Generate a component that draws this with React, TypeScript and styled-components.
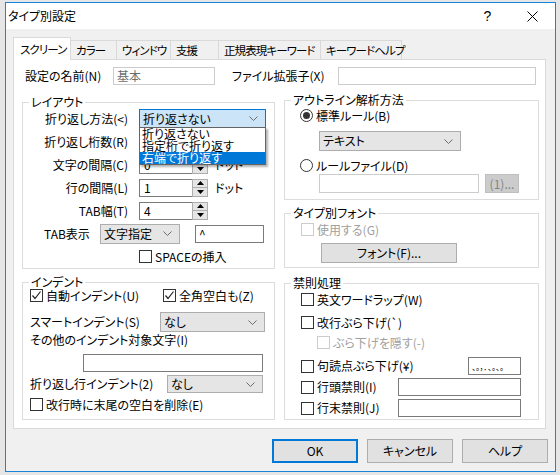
import React from "react";
import styled, { createGlobalStyle } from "styled-components";

const Global = createGlobalStyle`
  html, body { margin: 0; padding: 0; }
  body {
    background: #e6e6e6;
    font-family: "Noto Sans CJK JP", "Noto Sans", sans-serif;
    font-size: 12px;
    color: #000;
    font-feature-settings: "palt" 1;
  }
  * { box-sizing: border-box; }
`;

const Screen = styled.div`
  width: 560px;
  height: 475px;
  padding: 2px 4px 0 5px;
  overflow: hidden;
`;

const Window = styled.div`
  width: 551px;
  height: 470px;
  border: 1px solid #1883d7;
  background: #f0f0f0;
  display: flex;
  flex-direction: column;
`;

const TitleBar = styled.div`
  height: 26px;
  background: #fff;
  display: flex;
  align-items: center;
  padding-left: 2px;
  flex: none;
`;

const Title = styled.div`
  flex: 1;
  font-size: 12px;
  line-height: 14px;
`;

const CaptionButton = styled.div`
  width: 45px;
  height: 26px;
  display: flex;
  align-items: center;
  justify-content: center;
  font-family: "Liberation Sans", sans-serif;
  font-size: 14px;
`;

const Body = styled.div`
  padding: 8px 7px 0 7px;
  display: flex;
  flex-direction: column;
`;

const TabStrip = styled.div`
  display: flex;
  align-items: flex-end;
  height: 22px;
  position: relative;
  z-index: 1;
`;

const Tab = styled.div<{ $w: number; $active?: boolean; $first?: boolean }>`
  width: ${(p) => p.$w}px;
  height: ${(p) => (p.$active ? 23 : 19)}px;
  margin-bottom: ${(p) => (p.$active ? -1 : 0)}px;
  margin-left: ${(p) => (p.$first ? 0 : -1)}px;
  border: 1px solid #d9d9d9;
  border-bottom: none;
  background: ${(p) => (p.$active ? "#fff" : "#f0f0f0")};
  padding-left: ${(p) => (p.$active ? 6 : 5)}px;
  display: flex;
  align-items: center;
  white-space: nowrap;
  font-size: 11.5px;
  letter-spacing: -0.9px;
  line-height: 14px;
`;

const Panel = styled.div`
  height: 370px;
  margin-right: 2px;
  background: #fff;
  border: 1px solid #d9d9d9;
  padding: 7px 0 0 8px;
`;

const TopRow = styled.div`
  display: flex;
  align-items: center;
  height: 18px;
  margin-left: 3px;
`;

const FieldLabel = styled.div<{ $w?: number; $ml?: number; $disabled?: boolean }>`
  width: ${(p) => (p.$w ? `${p.$w}px` : "auto")};
  margin-left: ${(p) => p.$ml ?? 0}px;
  flex: none;
  white-space: nowrap;
  line-height: 14px;
  color: ${(p) => (p.$disabled ? "#a0a0a0" : "#000")};
`;

const Edit = styled.div<{ $w: number; $h?: number; $light?: boolean; $ml?: number; $small?: boolean }>`
  width: ${(p) => p.$w}px;
  height: ${(p) => p.$h ?? 18}px;
  margin-left: ${(p) => p.$ml ?? 0}px;
  flex: none;
  border: 1px solid ${(p) => (p.$light ? "#cccccc" : "#7a7a7a")};
  background: #fff;
  padding: 0 3px;
  display: flex;
  align-items: ${(p) => (p.$small ? "flex-end" : "center")};
  font-size: ${(p) => (p.$small ? 8 : 12)}px;
  line-height: 14px;
  color: ${(p) => (p.$light ? "#6d6d6d" : "#000")};
  white-space: nowrap;
  overflow: hidden;
`;

const Columns = styled.div`
  display: grid;
  grid-template-columns: 253px 255px;
  column-gap: 9px;
  margin-top: 8px;
  align-items: start;
`;

const Column = styled.div<{ $pt?: number }>`
  display: flex;
  flex-direction: column;
  padding-top: ${(p) => p.$pt ?? 0}px;
`;

const Group = styled.fieldset<{ $h: number; $mt?: number }>`
  margin: ${(p) => p.$mt ?? 0}px 0 0 0;
  padding: 0;
  border: 1px solid #dcdcdc;
  height: ${(p) => p.$h}px;
  min-width: 0;
`;

const Legend = styled.legend`
  margin-left: 6px;
  padding: 0 2px;
  line-height: 14px;
  font-size: 12px;
`;

const LayoutGrid = styled.div`
  display: grid;
  grid-template-columns: 105px auto;
  column-gap: 11px;
  row-gap: 4px;
  grid-auto-rows: 19px;
  align-items: center;
`;

const RightLabel = styled.div`
  text-align: right;
  white-space: nowrap;
  line-height: 14px;
`;

const Line = styled.div<{ $mt?: number; $pl?: number; $h?: number; $span?: boolean }>`
  display: flex;
  align-items: center;
  margin-top: ${(p) => p.$mt ?? 0}px;
  padding-left: ${(p) => p.$pl ?? 0}px;
  height: ${(p) => (p.$h ? `${p.$h}px` : "auto")};
  grid-column: ${(p) => (p.$span ? "1 / -1" : "auto")};
`;

const ComboBox = styled.div<{ $w: number; $h?: number; $focus?: boolean; $ml?: number }>`
  position: relative;
  width: ${(p) => p.$w}px;
  height: ${(p) => p.$h ?? 20}px;
  margin-left: ${(p) => p.$ml ?? 0}px;
  flex: none;
  display: flex;
  align-items: center;
  justify-content: space-between;
  padding: 0 7px 0 3px;
  background: ${(p) => (p.$focus ? "#cce4f7" : "#e5e5e5")};
  border: 1px solid ${(p) => (p.$focus ? "#0078d7" : "#adadad")};
  line-height: 14px;
  white-space: nowrap;
`;

const DropList = styled.div`
  position: absolute;
  left: -1px;
  top: 100%;
  width: 127px;
  background: #fff;
  border: 1px solid #646464;
  box-shadow: 2px 2px 2px rgba(0, 0, 0, 0.3);
  z-index: 5;
`;

const DropItem = styled.div<{ $sel?: boolean }>`
  height: 12px;
  line-height: 12px;
  padding-left: 2px;
  background: ${(p) => (p.$sel ? "#0078d7" : "transparent")};
  color: ${(p) => (p.$sel ? "#fff" : "#000")};
  white-space: nowrap;
`;

const Spin = styled.div`
  display: flex;
  align-items: center;
  height: 19px;
`;

const SpinEdit = styled.div`
  width: 53px;
  height: 18px;
  border: 1px solid #7a7a7a;
  border-right: none;
  background: #fff;
  padding-left: 4px;
  display: flex;
  align-items: center;
  line-height: 14px;
`;

const SpinButtons = styled.div`
  width: 16px;
  height: 18px;
  border: 1px solid #adadad;
  background: #e5e5e5;
  display: grid;
  grid-template-rows: 1fr 1fr;
`;

const SpinHalf = styled.div<{ $top?: boolean }>`
  display: flex;
  align-items: center;
  justify-content: center;
  border-bottom: ${(p) => (p.$top ? "1px solid #adadad" : "none")};
`;

const Unit = styled.div`
  margin-left: 7px;
  line-height: 14px;
  white-space: nowrap;
`;

const CheckBox = styled.div<{ $disabled?: boolean }>`
  width: 13px;
  height: 13px;
  flex: none;
  border: 1px solid ${(p) => (p.$disabled ? "#cccccc" : "#333333")};
  background: #fff;
  display: flex;
  align-items: center;
  justify-content: center;
`;

const Radio = styled.div`
  width: 13px;
  height: 13px;
  flex: none;
  border: 1px solid #333333;
  border-radius: 50%;
  background: #fff;
  display: flex;
  align-items: center;
  justify-content: center;
`;

const RadioDot = styled.div`
  width: 7px;
  height: 7px;
  border-radius: 50%;
  background: #333333;
`;

const CheckItem = styled.div<{ $w?: number; $disabled?: boolean }>`
  display: flex;
  align-items: center;
  width: ${(p) => (p.$w ? `${p.$w}px` : "auto")};
  flex: none;
  gap: 3px;
  line-height: 14px;
  white-space: nowrap;
  color: ${(p) => (p.$disabled ? "#a0a0a0" : "#000")};
`;

const PushButton = styled.div<{ $w: number; $h?: number; $default?: boolean; $disabled?: boolean; $ml?: number }>`
  width: ${(p) => p.$w}px;
  height: ${(p) => p.$h ?? 24}px;
  margin-left: ${(p) => p.$ml ?? 0}px;
  flex: none;
  display: flex;
  align-items: center;
  justify-content: center;
  background: ${(p) => (p.$disabled ? "#cccccc" : "#e1e1e1")};
  border: ${(p) => (p.$default ? "2px solid #0078d7" : `1px solid ${p.$disabled ? "#bfbfbf" : "#adadad"}`)};
  color: ${(p) => (p.$disabled ? "#838383" : "#000")};
  line-height: 14px;
  white-space: nowrap;
`;

const GroupBody = styled.div<{ $pl: number }>`
  display: flex;
  flex-direction: column;
  padding-left: ${(p) => p.$pl}px;
`;

const ButtonRow = styled.div`
  display: flex;
  justify-content: flex-end;
  gap: 9px;
  margin-top: 10px;
`;

const Chevron = () => (
  <svg width="9" height="5" viewBox="0 0 9 5">
    <polyline points="0.5,0.5 4.5,4.5 8.5,0.5" fill="none" stroke="#6d6d6d" strokeWidth="1" />
  </svg>
);

const Tick = () => (
  <svg width="11" height="11" viewBox="0 0 11 11">
    <polyline points="1.5,5.5 4,8.5 9.5,1.5" fill="none" stroke="#222" strokeWidth="1.2" />
  </svg>
);

const Arrow = ({ up }: { up?: boolean }) => (
  <svg width="7" height="4" viewBox="0 0 7 4">
    <polygon points={up ? "0,4 7,4 3.5,0" : "0,0 7,0 3.5,4"} fill="#000" />
  </svg>
);

const CloseIcon = () => (
  <svg width="11" height="11" viewBox="0 0 11 11">
    <line x1="0.5" y1="0.5" x2="10.5" y2="10.5" stroke="#000" strokeWidth="1" />
    <line x1="10.5" y1="0.5" x2="0.5" y2="10.5" stroke="#000" strokeWidth="1" />
  </svg>
);

const tabs = [
  { label: "スクリーン", w: 58, active: true },
  { label: "カラー", w: 47 },
  { label: "ウィンドウ", w: 55 },
  { label: "支援", w: 49 },
  { label: "正規表現キーワード", w: 103 },
  { label: "キーワードヘルプ", w: 82 },
];

const SpinBox = ({ value, unit }: { value: string; unit?: string }) => (
  <Spin>
    <SpinEdit>{value}</SpinEdit>
    <SpinButtons>
      <SpinHalf $top>
        <Arrow up />
      </SpinHalf>
      <SpinHalf>
        <Arrow />
      </SpinHalf>
    </SpinButtons>
    {unit && <Unit>{unit}</Unit>}
  </Spin>
);

export default function App() {
  return (
    <>
      <Global />
      <Screen>
        <Window>
          <TitleBar>
            <Title>タイプ別設定</Title>
            <CaptionButton>?</CaptionButton>
            <CaptionButton>
              <CloseIcon />
            </CaptionButton>
          </TitleBar>
          <Body>
            <TabStrip>
              {tabs.map((t, i) => (
                <Tab key={t.label} $w={t.w} $active={t.active} $first={i === 0}>
                  {t.label}
                </Tab>
              ))}
            </TabStrip>
            <Panel>
              <TopRow>
                <FieldLabel $w={88}>設定の名前(N)</FieldLabel>
                <Edit $w={102} $light>
                  基本
                </Edit>
                <FieldLabel $w={106} $ml={17}>
                  ファイル拡張子(X)
                </FieldLabel>
                <Edit $w={198} $light />
              </TopRow>
              <Columns>
                <Column $pt={2}>
                  <Group $h={174}>
                    <Legend>レイアウト</Legend>
                    <LayoutGrid>
                      <RightLabel>折り返し方法(&lt;)</RightLabel>
                      <Line>
                        <ComboBox $w={127} $h={19} $focus>
                          <span>折り返さない</span>
                          <Chevron />
                          <DropList>
                            <DropItem>折り返さない</DropItem>
                            <DropItem>指定桁で折り返す</DropItem>
                            <DropItem $sel>右端で折り返す</DropItem>
                          </DropList>
                        </ComboBox>
                      </Line>
                      <RightLabel>折り返し桁数(R)</RightLabel>
                      <SpinBox value="" />
                      <RightLabel>文字の間隔(C)</RightLabel>
                      <SpinBox value="0" unit="ドット" />
                      <RightLabel>行の間隔(L)</RightLabel>
                      <SpinBox value="1" unit="ドット" />
                      <RightLabel>TAB幅(T)</RightLabel>
                      <SpinBox value="4" />
                      <Line $span $pl={21} $h={20}>
                        <FieldLabel $w={56}>TAB表示</FieldLabel>
                        <ComboBox $w={80}>
                          <span>文字指定</span>
                          <Chevron />
                        </ComboBox>
                        <Edit $w={69} $ml={15}>
                          ^
                        </Edit>
                      </Line>
                      <Line $span $pl={116} $h={13}>
                        <CheckItem>
                          <CheckBox />
                          SPACEの挿入
                        </CheckItem>
                      </Line>
                    </LayoutGrid>
                  </Group>
                  <Group $h={145} $mt={6}>
                    <Legend>インデント</Legend>
                    <GroupBody $pl={7}>
                      <Line $h={13}>
                        <CheckItem $w={133}>
                          <CheckBox>
                            <Tick />
                          </CheckBox>
                          自動インデント(U)
                        </CheckItem>
                        <CheckItem>
                          <CheckBox>
                            <Tick />
                          </CheckBox>
                          全角空白も(Z)
                        </CheckItem>
                      </Line>
                      <Line $mt={10} $h={20}>
                        <FieldLabel $w={130}>スマートインデント(S)</FieldLabel>
                        <ComboBox $w={105}>
                          <span>なし</span>
                          <Chevron />
                        </ComboBox>
                      </Line>
                      <Line $mt={1} $h={14}>
                        <FieldLabel>その他のインデント対象文字(I)</FieldLabel>
                      </Line>
                      <Line $mt={7} $h={18}>
                        <Edit $w={180} $ml={53} />
                      </Line>
                      <Line $mt={3} $h={18}>
                        <FieldLabel $w={137}>折り返し行インデント(2)</FieldLabel>
                        <ComboBox $w={96} $h={18}>
                          <span>なし</span>
                          <Chevron />
                        </ComboBox>
                      </Line>
                      <Line $mt={5} $h={13}>
                        <CheckItem>
                          <CheckBox />
                          改行時に末尾の空白を削除(E)
                        </CheckItem>
                      </Line>
                    </GroupBody>
                  </Group>
                </Column>
                <Column>
                  <Group $h={107}>
                    <Legend>アウトライン解析方法</Legend>
                    <GroupBody $pl={15}>
                      <Line $mt={2} $h={13}>
                        <CheckItem>
                          <Radio>
                            <RadioDot />
                          </Radio>
                          標準ルール(B)
                        </CheckItem>
                      </Line>
                      <Line $mt={9} $h={20} $pl={19}>
                        <ComboBox $w={142}>
                          <span>テキスト</span>
                          <Chevron />
                        </ComboBox>
                      </Line>
                      <Line $mt={8} $h={13}>
                        <CheckItem>
                          <Radio />
                          ルールファイル(D)
                        </CheckItem>
                      </Line>
                      <Line $mt={2} $h={19} $pl={19}>
                        <Edit $w={160} $h={19} $light />
                        <PushButton $w={34} $h={19} $ml={6} $disabled>
                          (1)...
                        </PushButton>
                      </Line>
                    </GroupBody>
                  </Group>
                  <Group $h={62} $mt={6}>
                    <Legend>タイプ別フォント</Legend>
                    <GroupBody $pl={16}>
                      <Line $mt={3} $h={13}>
                        <CheckItem $disabled>
                          <CheckBox $disabled />
                          使用する(G)
                        </CheckItem>
                      </Line>
                      <Line $mt={7} $h={20} $pl={20}>
                        <PushButton $w={136} $h={20}>
                          フォント(F)...
                        </PushButton>
                      </Line>
                    </GroupBody>
                  </Group>
                  <Group $h={144} $mt={8}>
                    <Legend>禁則処理</Legend>
                    <GroupBody $pl={16}>
                      <Line $mt={3} $h={13}>
                        <CheckItem>
                          <CheckBox />
                          英文ワードラップ(W)
                        </CheckItem>
                      </Line>
                      <Line $mt={10} $h={13}>
                        <CheckItem>
                          <CheckBox />
                          改行ぶら下げ(`)
                        </CheckItem>
                      </Line>
                      <Line $mt={7} $h={13} $pl={16}>
                        <CheckItem $disabled>
                          <CheckBox $disabled />
                          ぶら下げを隠す(-)
                        </CheckItem>
                      </Line>
                      <Line $mt={8} $h={18}>
                        <CheckItem $w={167}>
                          <CheckBox />
                          句読点ぶら下げ(¥)
                        </CheckItem>
                        <Edit $w={53} $small>
                          、。，．､｡､｡
                        </Edit>
                      </Line>
                      <Line $mt={3} $h={18}>
                        <CheckItem $w={97}>
                          <CheckBox />
                          行頭禁則(I)
                        </CheckItem>
                        <Edit $w={123} />
                      </Line>
                      <Line $mt={3} $h={18}>
                        <CheckItem $w={97}>
                          <CheckBox />
                          行末禁則(J)
                        </CheckItem>
                        <Edit $w={123} />
                      </Line>
                    </GroupBody>
                  </Group>
                </Column>
              </Columns>
            </Panel>
            <ButtonRow>
              <PushButton $w={86} $default>
                OK
              </PushButton>
              <PushButton $w={86}>キャンセル</PushButton>
              <PushButton $w={86}>ヘルプ</PushButton>
            </ButtonRow>
          </Body>
        </Window>
      </Screen>
    </>
  );
}
